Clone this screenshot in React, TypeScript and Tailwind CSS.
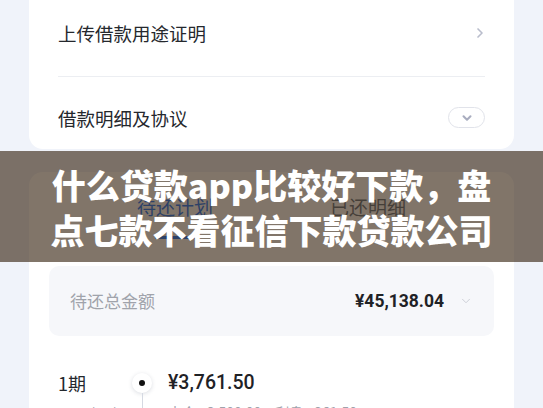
import { ChevronDown, ChevronRight } from "lucide-react";

export default function App() {
    return (
        <div className="relative w-[543px] h-[408px] overflow-hidden bg-[#f0f3fa] font-['Noto_Sans_CJK_SC',sans-serif] text-[#25282d]">
            <div className="mx-[29px]">
                {/* Top card */}
                <div className="bg-white rounded-b-[14px] px-[29px]">
                    <div className="h-[77px] pb-[10px] flex items-center justify-between border-b border-[#eceef2]">
                        <p className="text-[18.5px] leading-[26px]">上传借款用途证明</p>
                        <ChevronRight className="w-[16px] h-[16px] text-[#b9bdcc] -mr-[3px]" strokeWidth={2.5} />
                    </div>
                    <div className="h-[72px] pt-[9px] flex items-center justify-between">
                        <p className="text-[18.5px] leading-[26px]">借款明细及协议</p>
                        <div className="w-[37px] h-[21px] rounded-full border border-[#e1e3ea] flex items-center justify-center">
                            <ChevronDown className="w-[14px] h-[14px] text-[#a9adbf]" strokeWidth={3.5} />
                        </div>
                    </div>
                </div>

                {/* Repayment card */}
                <div className="mt-[23px] bg-white rounded-t-[14px]">
                    <div className="flex justify-center pt-[22px]">
                        <div className="w-[193px] flex flex-col items-center">
                            <p className="text-[19px] leading-[26px] text-[#2f7df8]">待还计划</p>
                            <div className="mt-[16px] w-[40px] h-[3px] rounded-full bg-[#2f7df8]" />
                        </div>
                        <div className="w-[193px] flex flex-col items-center">
                            <p className="text-[19px] leading-[26px] text-[#6a7888]">已还明细</p>
                        </div>
                    </div>

                    <div className="mx-[20px] mt-[27px] h-[70px] rounded-[10px] bg-[#f6f7fa] px-[21px] flex items-center justify-between">
                        <p className="text-[17px] text-[#a0a3ab]">待还总金额</p>
                        <div className="flex items-center gap-[15px]">
                            <p className="font-['Roboto',sans-serif] font-bold text-[17.5px] text-[#1f2226]">¥45,138.04</p>
                            <ChevronDown className="w-[14px] h-[14px] text-[#c6c9d1]" strokeWidth={1.5} />
                        </div>
                    </div>

                    <div className="mt-[34px] px-[29px] flex">
                        <div className="w-[70px]">
                            <p className="text-[18px] leading-[26px]">1期</p>
                            <p className="mt-[6px] text-[14px] text-[#a0a3ab]">2023/04/08</p>
                        </div>
                        <div className="w-[28px] flex flex-col items-center">
                            <div className="mt-[3px] w-[20px] h-[20px] rounded-full bg-white shadow-[0_1px_4px_rgba(60,70,100,0.18)] flex items-center justify-center">
                                <div className="w-[6px] h-[6px] rounded-full bg-[#111]" />
                            </div>
                            <div className="w-px h-[40px] bg-[#d5d9e2]" />
                        </div>
                        <div className="ml-[12px]">
                            <p className="font-['Roboto',sans-serif] font-medium text-[19.5px] leading-[26px] text-[#1f2226]">¥3,761.50</p>
                            <p className="mt-[6px] text-[14px] text-[#a0a3ab]">本金 ¥3,500.00　利息 ¥261.50</p>
                        </div>
                    </div>
                </div>
            </div>

            {/* Title banner over the screenshot */}
            <div className="absolute left-0 right-0 top-[151px] h-[111px] bg-[rgba(45,25,5,0.6)] flex items-center justify-center">
                <h1 className="text-white font-black text-[34px] leading-[45px] text-center">
                    什么贷款app比较好下款，盘
                    <br />
                    点七款不看征信下款贷款公司
                </h1>
            </div>
        </div>
    );
}
